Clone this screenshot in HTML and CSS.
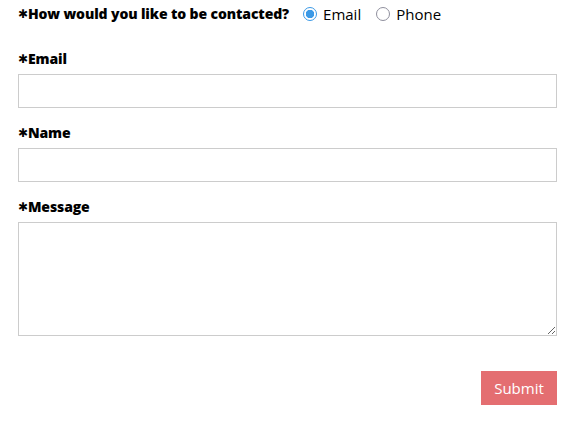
FILE: index.html
```html
<!DOCTYPE html>
<html>
<head>
<meta charset="utf-8">
<link rel="stylesheet" href="styles.css">
</head>
<body>
<form class="form">
  <div class="contact-row">
    <span class="label"><span class="req">✱</span>How would you like to be contacted?</span>
    <label class="radio"><span class="dot checked"></span>Email</label>
    <label class="radio"><span class="dot"></span>Phone</label>
  </div>
  <div class="field">
    <span class="label"><span class="req">✱</span>Email</span>
    <input class="input" type="text">
  </div>
  <div class="field">
    <span class="label"><span class="req">✱</span>Name</span>
    <input class="input" type="text">
  </div>
  <div class="field">
    <span class="label"><span class="req">✱</span>Message</span>
    <textarea class="textarea"></textarea>
  </div>
  <div class="actions">
    <button class="submit" type="button">Submit</button>
  </div>
</form>
</body>
</html>
```
FILE: styles.css
```css
html, body {
  margin: 0;
  padding: 0;
  background: #fff;
}
body {
  font-family: "Open Sans", "DejaVu Sans", sans-serif;
  color: #000;
}
.form {
  padding: 0 28px 0 18px;
  display: flex;
  flex-direction: column;
}
.contact-row {
  height: 28px;
  display: flex;
  align-items: center;
}
.label {
  font-weight: 800;
  font-size: 14px;
  line-height: 20px;
  letter-spacing: -0.12px;
  display: flex;
  align-items: center;
}
.req {
  font-family: "DejaVu Sans", sans-serif;
  font-weight: 700;
  font-size: 12px;
  margin-right: 0;
}
.radio {
  display: flex;
  align-items: center;
  font-size: 15px;
  margin-left: 14px;
}
.radio + .radio {
  margin-left: 15px;
}
.dot {
  width: 12px;
  height: 12px;
  border: 1px solid #8f8f9d;
  border-radius: 50%;
  margin-right: 6px;
  box-sizing: content-box;
  background: #fff;
}
.dot.checked {
  border-color: #3b99e6;
  background: radial-gradient(circle, #3b99e6 0 4px, #fff 4.5px);
}
.field {
  display: flex;
  flex-direction: column;
  gap: 5px;
  margin-top: 15px;
}
.contact-row + .field {
  margin-top: 21px;
}
.input {
  height: 34px;
  box-sizing: border-box;
  border: 1px solid #cccccc;
  margin: 0;
  padding: 0 8px;
  font: inherit;
}
.textarea {
  height: 114px;
  box-sizing: border-box;
  border: 1px solid #cccccc;
  margin: 0;
  padding: 6px 8px;
  font: inherit;
  resize: vertical;
}
.actions {
  display: flex;
  justify-content: flex-end;
  margin-top: 35px;
}
.submit {
  width: 76px;
  height: 34px;
  background: #e46e71;
  color: #fff;
  border: none;
  border-radius: 0;
  font-family: inherit;
  font-size: 15px;
  padding: 0;
}
```
